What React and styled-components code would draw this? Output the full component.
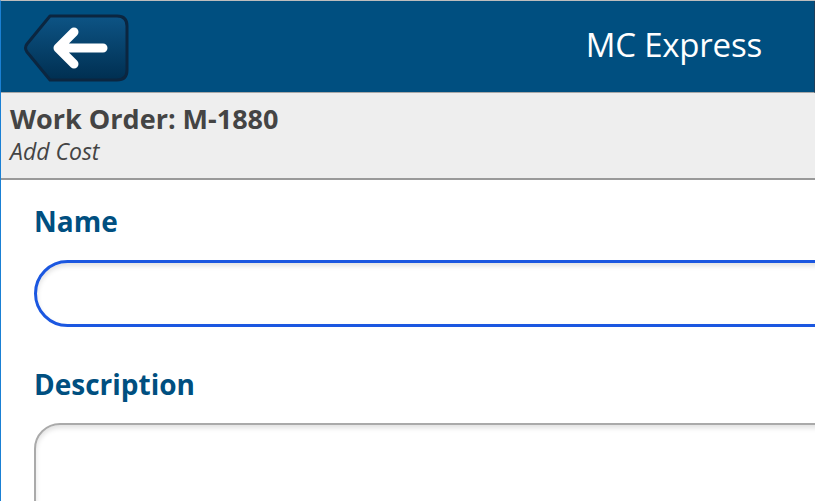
import styled, { createGlobalStyle } from "styled-components";

const GlobalStyle = createGlobalStyle`
    html, body {
        margin: 0;
        padding: 0;
        overflow: hidden;
        background: #fff;
    }
    body {
        font-family: "Open Sans", "DejaVu Sans", sans-serif;
    }
`

const Page = styled.div`
    width: 815px;
    height: 501px;
    box-sizing: border-box;
    border-top: 1px solid #bdbdbd;
    border-left: 1px solid #1a80d4;
    overflow: hidden;
    display: flex;
    flex-direction: column;
`

const Header = styled.div`
    height: 91px;
    flex-shrink: 0;
    background-color: #004f80;
    border-bottom: 1px solid #a8a8a8;
    border-right: 1px solid #1d3f5c;
    display: flex;
    align-items: center;
    justify-content: space-between;
    padding: 0 52px 0 22px;
`

const BackButton = styled.button`
    width: 106px;
    height: 68px;
    padding: 0;
    margin-top: 2px;
    border: none;
    background: none;
    cursor: pointer;
    display: flex;
`

const Title = styled.h1`
    margin: 0 0 5px;
    color: #fff;
    font-weight: 400;
    font-size: 33px;
    letter-spacing: -0.2px;
`

const SubHeader = styled.div`
    flex-shrink: 0;
    background-color: #eeeeee;
    border-bottom: 2px solid #999;
    padding: 10px 9px 11px;
    color: #444;
`

const OrderTitle = styled.div`
    font-weight: 700;
    font-size: 27px;
    line-height: 32px;
`

const Subtitle = styled.div`
    font-style: italic;
    font-size: 23px;
    line-height: 32px;
`

const Form = styled.div`
    padding: 24px 0 0 33px;
    display: flex;
    flex-direction: column;
`

const Label = styled.label`
    color: #004f80;
    font-weight: 700;
    font-size: 28px;
    line-height: 34px;
    margin-bottom: 22px;
`

const Field = styled.div`
    width: 900px;
    box-sizing: border-box;
    height: ${p => p.$tall ? "140px" : "67px"};
    border: ${p => p.$focused ? "3px solid #1b57e0" : "2px solid #aaaaaa"};
    border-radius: ${p => p.$tall ? "26px" : "34px"};
    background: #fff;
    box-shadow: inset 0 3px 5px rgba(0, 0, 0, 0.12);
    margin-bottom: ${p => p.$tall ? "0" : "40px"};
`

const BackIcon = () => (
    <svg width="106" height="68" viewBox="0 0 106 68">
        <defs>
            <linearGradient id="bk" x1="0" y1="0" x2="0" y2="1">
                <stop offset="0" stopColor="#0d5485" />
                <stop offset="1" stopColor="#002f51" />
            </linearGradient>
        </defs>
        <path
            d="M27 2 L94 2 Q104 2 104 12 L104 56 Q104 66 94 66 L27 66 L4 38 Q1 34 4 30 Z"
            fill="url(#bk)"
            stroke="#0b2640"
            strokeWidth="3"
            strokeLinejoin="round"
        />
        <path
            d="M80 34 L36 34 M51 18 L35 34 L51 50"
            fill="none"
            stroke="#fff"
            strokeWidth="9"
            strokeLinecap="round"
            strokeLinejoin="round"
        />
    </svg>
)

const App = () => {
    return (
        <Page>
            <GlobalStyle />
            <Header>
                <BackButton aria-label="Back"><BackIcon /></BackButton>
                <Title>MC Express</Title>
            </Header>
            <SubHeader>
                <OrderTitle>Work Order: M-1880</OrderTitle>
                <Subtitle>Add Cost</Subtitle>
            </SubHeader>
            <Form>
                <Label>Name</Label>
                <Field $focused />
                <Label>Description</Label>
                <Field $tall />
            </Form>
        </Page>
    )
}

export default App
